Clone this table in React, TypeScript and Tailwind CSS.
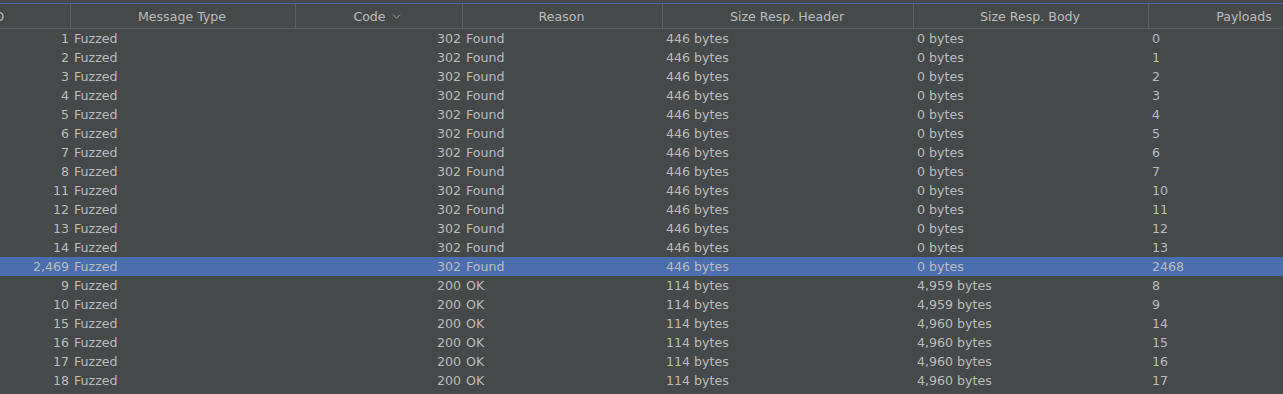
import { ChevronDown } from "lucide-react";

type Row = {
  id: string;
  code: string;
  reason: string;
  head: string;
  body: string;
  payload: string;
  selected?: boolean;
};

const found = (id: string, payload: string, selected = false): Row => ({
  id,
  code: "302",
  reason: "Found",
  head: "446 bytes",
  body: "0 bytes",
  payload,
  selected,
});

const ok = (id: string, body: string, payload: string): Row => ({
  id,
  code: "200",
  reason: "OK",
  head: "114 bytes",
  body,
  payload,
});

const rows: Row[] = [
  found("1", "0"),
  found("2", "1"),
  found("3", "2"),
  found("4", "3"),
  found("5", "4"),
  found("6", "5"),
  found("7", "6"),
  found("8", "7"),
  found("11", "10"),
  found("12", "11"),
  found("13", "12"),
  found("14", "13"),
  found("2,469", "2468", true),
  ok("9", "4,959 bytes", "8"),
  ok("10", "4,959 bytes", "9"),
  ok("15", "4,960 bytes", "14"),
  ok("16", "4,960 bytes", "15"),
  ok("17", "4,960 bytes", "16"),
  ok("18", "4,960 bytes", "17"),
  ok("19", "4,960 bytes", "18"),
];

// column widths; the ID column is partly scrolled out on the left
const cols = ["w-[144px]", "w-[225px]", "w-[167px]", "w-[200px]", "w-[251px]", "w-[235px]", "w-[192px]"];

export default function App() {
  return (
    <div
      className="w-[1283px] h-[394px] overflow-hidden bg-[#45494a] text-[#bbbbbb] text-[12.6px] leading-[19px]"
      style={{ fontFamily: '"DejaVu Sans", sans-serif' }}
    >
      <div className="h-[3px]" />
      <div className="h-px bg-[#4a6a94]" />
      <div className="-ml-[73px] w-max">
        {/* Header */}
        <div className="flex h-[25px] border-b border-[#5e6060]">
          {["ID", "Message Type", "Code", "Reason", "Size Resp. Header", "Size Resp. Body", "Payloads"].map((h, i) => (
            <div
              key={h}
              className={`${cols[i]} flex items-center justify-center gap-1 pt-px pr-[2px] border-r border-[#5e6060] last:border-r-0`}
            >
              <span>{h}</span>
              {h === "Code" && <ChevronDown size={13} strokeWidth={1.4} />}
            </div>
          ))}
        </div>

        {/* Rows */}
        {rows.map((r, i) => (
          <div key={i} className={`flex h-[19px] ${r.selected ? "bg-[#4b6eaf]" : ""}`}>
            <div className={`${cols[0]} text-right pr-[2px]`}>{r.id}</div>
            <div className={`${cols[1]} pl-[3px]`}>Fuzzed</div>
            <div className={`${cols[2]} text-right pr-[2px]`}>{r.code}</div>
            <div className={`${cols[3]} pl-[3px]`}>{r.reason}</div>
            <div className={`${cols[4]} pl-[3px]`}>{r.head}</div>
            <div className={`${cols[5]} pl-[3px]`}>{r.body}</div>
            <div className={`${cols[6]} pl-[3px]`}>{r.payload}</div>
          </div>
        ))}
      </div>
    </div>
  );
}
